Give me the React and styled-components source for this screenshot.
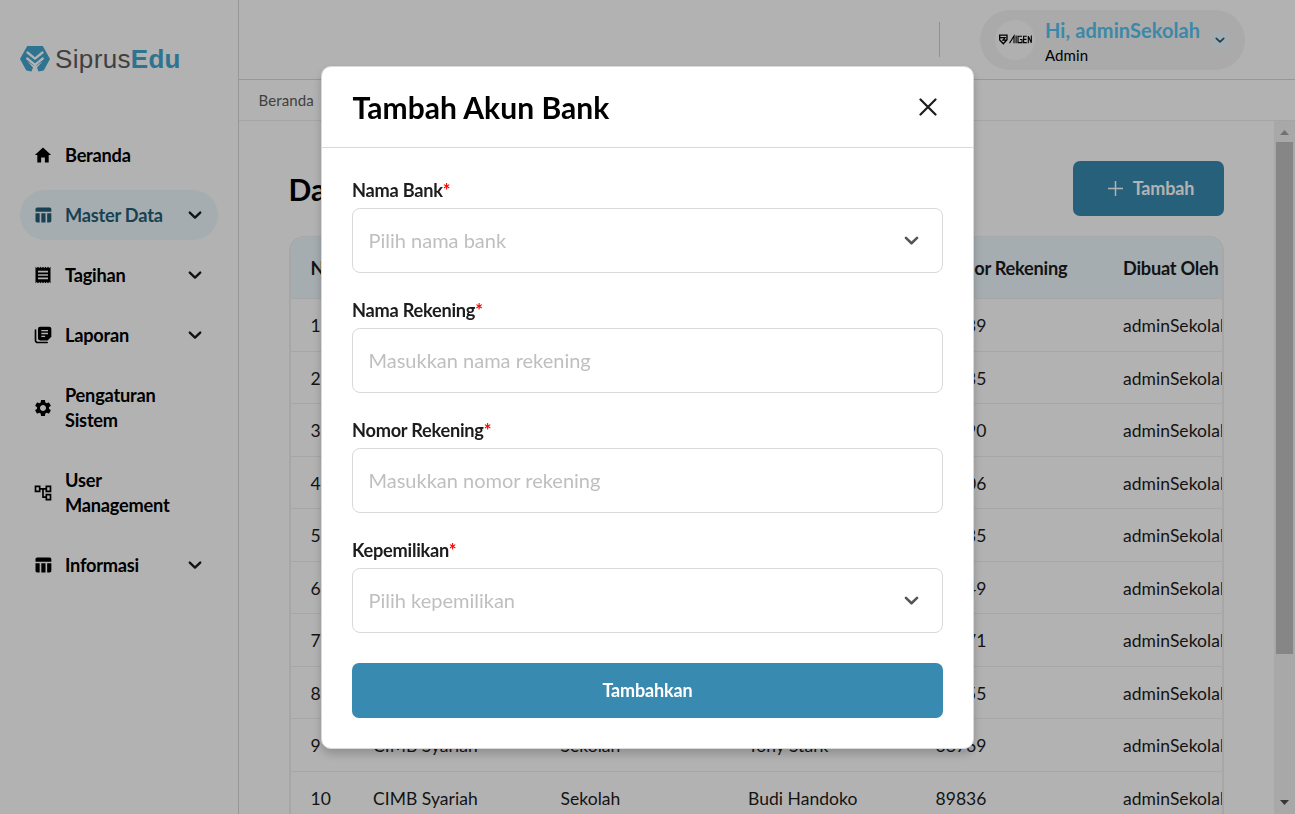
import React from "react";
import styled, { createGlobalStyle } from "styled-components";
import { MdTableChart, MdReceipt, MdSettings, MdOutlineAccountTree } from "react-icons/md";
import { IoMdHome } from "react-icons/io";

const GlobalStyle = createGlobalStyle`
  *, *::before, *::after { box-sizing: border-box; }
  body {
    margin: 0;
    overflow: hidden;
    background: #fff;
    color: #000;
    font-family: Lato, "Liberation Sans", sans-serif;
  }
`;

const Page = styled.div`
  display: flex;
  height: 814px;
  overflow: hidden;
`;

const Sidebar = styled.aside`
  flex: none;
  width: 239px;
  border-right: 1px solid #d9d9d9;
`;

const Brand = styled.div`
  display: flex;
  align-items: center;
  gap: 5px;
  height: 40px;
  margin: 39px 0 51px 20px;
`;

const BrandText = styled.span`
  font-family: "Liberation Sans", Arial, sans-serif;
  font-size: 26px;
  letter-spacing: 0.35px;
  line-height: 30px;
  color: #5c5c5c;

  b {
    letter-spacing: 0.3px;
    color: #42a5cf;
  }
`;

const Nav = styled.nav`
  display: flex;
  flex-direction: column;
  gap: 10px;
  padding: 0 20px;
`;

const NavItem = styled.div`
  display: flex;
  align-items: center;
  width: 198px;
  min-height: 50px;
  padding: 12.5px 16px 12.5px 13px;
  border-radius: 25px;
  background: ${(p) => (p.$active ? "#ecf8fc" : "transparent")};
  color: ${(p) => (p.$active ? "#265d77" : "#000")};
  font-size: 18.2px;
  font-weight: 700;
  letter-spacing: -0.22px;
  line-height: 25px;

  > svg:first-child {
    flex: none;
    width: 20px;
    height: 20px;
    margin-right: 12px;
  }
`;

const NavLabel = styled.span`
  flex: 1;
  white-space: pre-line;
`;

const Main = styled.main`
  flex: 1;
  min-width: 0;
  display: flex;
  flex-direction: column;
`;

const Header = styled.header`
  flex: none;
  display: flex;
  align-items: center;
  justify-content: flex-end;
  gap: 40px;
  height: 80px;
  padding-right: 50px;
  border-bottom: 1px solid #d9d9d9;
`;

const Divider = styled.div`
  width: 1px;
  height: 35px;
  background: #d0d0d0;
`;

const Profile = styled.div`
  display: flex;
  align-items: center;
  width: 265px;
  height: 60px;
  padding: 0 15px;
  border-radius: 30px;
  background: #f4f4f4;
`;

const Avatar = styled.div`
  display: grid;
  place-items: center;
  width: 40px;
  height: 40px;
  margin-right: 10px;
  border-radius: 50%;
  background: #fcfcfc;
`;

const ProfileText = styled.div`
  flex: 1;
  padding-top: 6px;
  white-space: nowrap;
`;

const Greeting = styled.div`
  font-size: 20px;
  font-weight: 700;
  letter-spacing: 0.07px;
  line-height: 25px;
  color: #57c3f2;
`;

const Role = styled.div`
  font-size: 15px;
  letter-spacing: 0.1px;
  line-height: 25px;
`;

const RoundToggle = styled.div`
  display: grid;
  place-items: center;
  width: 20px;
  height: 20px;
  border-radius: 50%;
  background: #ecf8fc;
`;

const Breadcrumb = styled.div`
  flex: none;
  height: 41px;
  padding-left: 19.5px;
  border-bottom: 1px solid #ececec;
  font-size: 15px;
  letter-spacing: 0.1px;
  line-height: 41px;
  color: #5c5c5c;
`;

const Scroller = styled.div`
  flex: 1;
  min-height: 0;
  display: flex;
`;

const Content = styled.section`
  flex: 1;
  min-width: 0;
  overflow: hidden;
  padding: 40px 50px 0;
`;

const ScrollTrack = styled.div`
  flex: none;
  display: flex;
  flex-direction: column;
  align-items: center;
  justify-content: space-between;
  width: 21px;
  padding: 9px 0 9px;
  background: #f1f1f1;
`;

const ScrollThumb = styled.div`
  width: 17px;
  height: 512px;
  margin: 7px 0 auto;
  background: #c1c1c1;
`;

const TitleRow = styled.div`
  display: flex;
  align-items: center;
  justify-content: space-between;
  margin-bottom: 20px;
`;

const PageTitle = styled.h1`
  margin: 0 0 0 -0.5px;
  font-size: 30px;
  font-weight: 700;
`;

const PrimaryButton = styled.button`
  display: flex;
  align-items: center;
  justify-content: center;
  gap: 10px;
  width: ${(p) => p.$width};
  height: 55px;
  padding: 0 0 1px ${(p) => p.$shift || "0"};
  border: 0;
  border-radius: 7px;
  background: #388ab0;
  color: #fff;
  font: 700 18px/24px Lato, "Liberation Sans", sans-serif;
  letter-spacing: -0.15px;
`;

const ButtonText = styled.span`
  padding-bottom: 1px;
`;

const TableFrame = styled.div`
  height: 700px;
  overflow: hidden;
  border: 2px solid #efefef;
  border-width: 1px 2px;
  border-radius: 15px;
`;

const Row = styled.div`
  display: grid;
  grid-template-columns: 62.5px repeat(5, 187.5px);
  align-items: center;
  height: ${(p) => (p.$head ? "62px" : "52.5px")};
  border-bottom: 1px solid #efefef;
  background: ${(p) => (p.$head ? "#ecf8fc" : "transparent")};
  color: #1c1c1c;
  font-size: ${(p) => (p.$head ? "18.2px" : "17.5px")};
  font-weight: ${(p) => (p.$head ? 700 : 400)};
  letter-spacing: ${(p) => (p.$head ? "-0.24px" : "0.04px")};
  white-space: nowrap;
`;

const Cell = styled.div`
  padding: 1.5px 0 0 19.5px;
`;

const Backdrop = styled.div`
  position: fixed;
  inset: 0;
  display: flex;
  align-items: center;
  justify-content: center;
  background: rgba(0, 0, 0, 0.3);
`;

const Dialog = styled.div`
  width: 653px;
  height: 683px;
  margin-top: 1px;
  border: 1px solid #d9d9d9;
  border-radius: 10px;
  background: #fff;
  box-shadow: 0 5px 10px rgba(0, 0, 0, 0.2);
`;

const DialogHeader = styled.div`
  display: flex;
  align-items: center;
  justify-content: space-between;
  height: 81px;
  padding: 0 36px 0 30.5px;
  border-bottom: 1px solid #d9d9d9;
`;

const DialogTitle = styled.h2`
  margin: 0;
  font-size: 30px;
  font-weight: 700;
  letter-spacing: 0.04px;
`;

const Form = styled.form`
  padding: 30px 30px 0;
`;

const Field = styled.div`
  margin-bottom: ${(p) => (p.$last ? "30px" : "25px")};
`;

const Label = styled.div`
  height: 25px;
  font-size: 18.2px;
  font-weight: 700;
  letter-spacing: -0.25px;
  line-height: 24px;
  color: #1c1c1c;

  span {
    color: #f00;
  }
`;

const Control = styled.div`
  display: flex;
  align-items: center;
  justify-content: space-between;
  height: 65px;
  margin-top: 5px;
  padding: 0 23px 2px 15.5px;
  border: 1px solid #d9d9d9;
  border-radius: 8px;
  font-size: 20px;
  color: #bfbfbf;

  svg {
    margin-top: 2px;
  }
`;

function Chevron({ size = 14, color = "#1c1c1c", weight = 2.4 }) {
  return (
    <svg width={size} height={size} viewBox="0 0 14 14" fill="none" stroke={color} strokeWidth={weight} strokeLinecap="round" strokeLinejoin="round">
      <path d="M1.8 4.6 7 9.6l5.2-5" />
    </svg>
  );
}

function BrandMark() {
  return (
    <svg width="30" height="26" viewBox="0 0 30 26">
      <path d="M7.2 0h15.6L30 13l-6.300 11.500-5.200 1.100-1.500-4 5.500-6.100L15 20.500l-7.500-5 5.500 6.100-1.500 4-5.200-1.100L0 13z" fill="#42a5cf" />
      <path d="M7.500 6.500 15 12.700l7.500-6.200M7.200 12.500l7.800 6.300 7.800-6.300M15 19v7" fill="none" stroke="#fff" strokeWidth="2.300" strokeLinecap="round" strokeLinejoin="round" />
    </svg>
  );
}

function StackedDocs() {
  return (
    <svg viewBox="0 0 24 24">
      <path d="M8.500 2h11A2.500 2.500 0 0 1 22 4.500V14l-4.500 4.500h-9A2.500 2.500 0 0 1 6 16V4.500A2.500 2.500 0 0 1 8.500 2z" fill="currentColor" />
      <path d="M3 6v12.500A2.500 2.500 0 0 0 5.500 21H17" fill="none" stroke="currentColor" strokeWidth="2" strokeLinecap="round" />
      <path d="M10 6.800h8M10 10.200h8M10 13.600h4.500" stroke="#fff" strokeWidth="1.600" />
    </svg>
  );
}

function AvatarLogo() {
  return (
    <svg width="34" height="11" viewBox="0 0 34 11" fill="none" stroke="#000" strokeWidth="1.1">
      <path d="M1.700 1.200h7.300v4.500L5.300 9.800 1.700 6zM1.500 3.700h5.500L5 6.200h3.800" strokeWidth="1.300" />
      <path d="M11.500 9.200 16 2v7.200M18.100 1.500v7.700M24 2.200h-4v6.400h4V5.500h-2M28.800 2.200h-3.200v6.400h3.200M25.800 5.400h2.600M30.300 9.200V2.200l3 6.500V1.500" />
    </svg>
  );
}

const menu = [
  { icon: IoMdHome, label: "Beranda" },
  { icon: MdTableChart, label: "Master Data", active: true, more: true },
  { icon: MdReceipt, label: "Tagihan", more: true },
  { icon: StackedDocs, label: "Laporan", more: true },
  { icon: MdSettings, label: "Pengaturan\nSistem" },
  { icon: MdOutlineAccountTree, label: "User\nManagement" },
  { icon: MdTableChart, label: "Informasi", more: true },
];

const columns = ["No", "Nama Bank", "Kepemilikan", "Nama Rekening", "Nomor Rekening", "Dibuat Oleh"];

const accounts = ["89839", "89835", "89890", "89806", "89835", "89849", "89871", "89855", "68769", "89836"].map((number, i) => [
  i + 1,
  "CIMB Syariah",
  "Sekolah",
  i === 8 ? "Tony Stark" : "Budi Handoko",
  number,
  "adminSekolah",
]);

const fields = [
  { label: "Nama Bank", placeholder: "Pilih nama bank", select: true },
  { label: "Nama Rekening", placeholder: "Masukkan nama rekening" },
  { label: "Nomor Rekening", placeholder: "Masukkan nomor rekening" },
  { label: "Kepemilikan", placeholder: "Pilih kepemilikan", select: true },
];

export default function App() {
  return (
    <>
      <GlobalStyle />
      <Page>
        <Sidebar>
          <Brand>
            <BrandMark />
            <BrandText>Siprus<b>Edu</b></BrandText>
          </Brand>
          <Nav>
            {menu.map(({ icon: Icon, label, active, more }) => (
              <NavItem key={label} $active={active}>
                <Icon />
                <NavLabel>{label}</NavLabel>
                {more && <Chevron />}
              </NavItem>
            ))}
          </Nav>
        </Sidebar>
        <Main>
          <Header>
            <Divider />
            <Profile>
              <Avatar><AvatarLogo /></Avatar>
              <ProfileText>
                <Greeting>Hi, adminSekolah</Greeting>
                <Role>Admin</Role>
              </ProfileText>
              <RoundToggle><Chevron size={10} color="#265d77" /></RoundToggle>
            </Profile>
          </Header>
          <Breadcrumb>Beranda</Breadcrumb>
          <Scroller>
            <Content>
              <TitleRow>
                <PageTitle>Data Akun Bank</PageTitle>
                <PrimaryButton $width="151px" $shift="5px">
                  <svg width="15" height="15" viewBox="0 0 15 15" stroke="#fff" strokeWidth="1.5">
                    <path d="M7.5 0v15M0 7.500h15" />
                  </svg>
                  <ButtonText>Tambah</ButtonText>
                </PrimaryButton>
              </TitleRow>
              <TableFrame>
                <Row $head>
                  {columns.map((c) => <Cell key={c}>{c}</Cell>)}
                </Row>
                {accounts.map((row) => (
                  <Row key={row[0]}>
                    {row.map((value, i) => <Cell key={i}>{value}</Cell>)}
                  </Row>
                ))}
              </TableFrame>
            </Content>
            <ScrollTrack>
              <svg width="9" height="5" viewBox="0 0 9 5"><path d="M0 5 4.500 0 9 5z" fill="#a3a3a3" /></svg>
              <ScrollThumb />
              <svg width="9" height="5" viewBox="0 0 9 5"><path d="M0 0h9L4.500 5z" fill="#505050" /></svg>
            </ScrollTrack>
          </Scroller>
        </Main>
      </Page>
      <Backdrop>
        <Dialog>
          <DialogHeader>
            <DialogTitle>Tambah Akun Bank</DialogTitle>
            <svg width="18" height="18" viewBox="0 0 18 18" stroke="#1c1c1c" strokeWidth="2.2" strokeLinecap="round">
              <path d="M1.500 1.500l15 15M16.500 1.500l-15 15" />
            </svg>
          </DialogHeader>
          <Form>
            {fields.map((f, i) => (
              <Field key={f.label} $last={i === fields.length - 1}>
                <Label>{f.label}<span>*</span></Label>
                <Control>
                  {f.placeholder}
                  {f.select && <Chevron size={15} color="#555" />}
                </Control>
              </Field>
            ))}
            <PrimaryButton type="button" $width="100%">
              <ButtonText>Tambahkan</ButtonText>
            </PrimaryButton>
          </Form>
        </Dialog>
      </Backdrop>
    </>
  );
}
